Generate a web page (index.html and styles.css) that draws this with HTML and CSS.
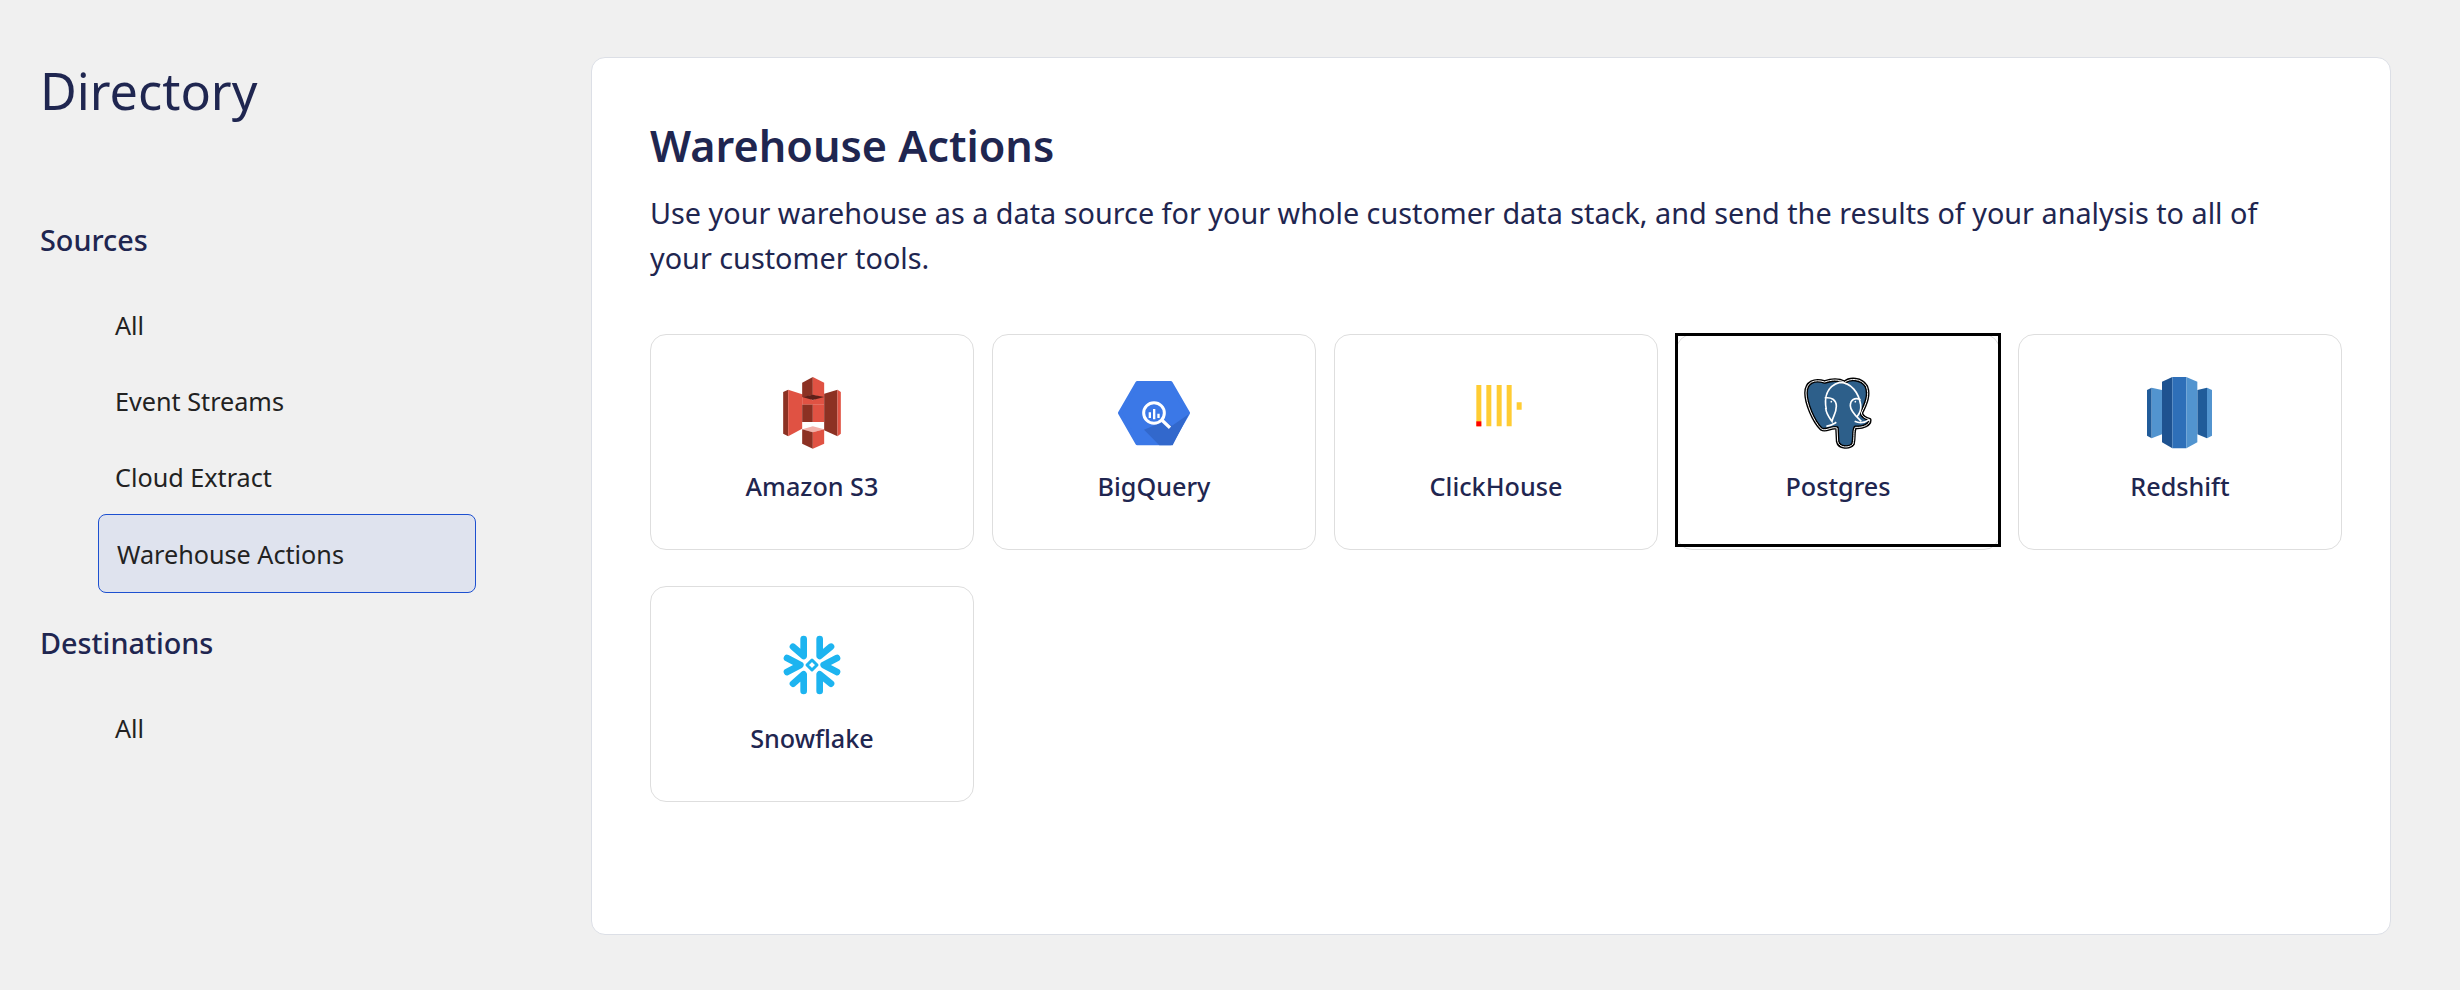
FILE: index.html
```html
<!DOCTYPE html>
<html lang="en">
<head>
  <meta charset="UTF-8" />
  <title>Directory</title>
  <link rel="stylesheet" href="styles.css">
</head>
<body>
  <div class="page">
    <aside class="sidebar">
      <h1>Directory</h1>
      <h3 class="group-title first">Sources</h3>
      <ul class="nav">
        <li>All</li>
        <li>Event Streams</li>
        <li>Cloud Extract</li>
        <li class="active">Warehouse Actions</li>
      </ul>
      <h3 class="group-title">Destinations</h3>
      <ul class="nav">
        <li>All</li>
      </ul>
    </aside>

    <main class="panel">
      <h2>Warehouse Actions</h2>
      <p class="intro">Use your warehouse as a data source for your whole customer data stack, and send the results of your analysis to all of your customer tools.</p>

      <div class="grid">
        <div class="card">
          <svg class="icon" width="58" height="72" viewBox="127 80 173 216">
            <path fill="#8c3123" d="M127 125l15-7v140l-15-8z"/>
            <path fill="#e05243" d="M142 118l42 14v103l-42 23z"/>
            <path fill="#e05243" d="M184 132l32 18 34-18v31h-66z"/>
            <path fill="#8c3123" d="M184 163h32v52h-32z"/>
            <path fill="#e05243" d="M216 163h34v52h-34z"/>
            <path fill="#8c3123" d="M184 97l32-17v55l-32 5z"/>
            <path fill="#e05243" d="M216 80l34 17v43l-34-5z"/>
            <path fill="#5e1f18" d="M184 140l32-7 34 7-34 9z"/>
            <path fill="#8c3123" d="M250 130l40-12v140l-40-18z"/>
            <path fill="#e05243" d="M290 118l10 7v125l-10 8z"/>
            <path fill="#f2b0a9" d="M184 237l32-9 34 9-34 9z"/>
            <path fill="#8c3123" d="M184 237l32 9v49l-32-15z"/>
            <path fill="#e05243" d="M216 246l34-9v43l-34 15z"/>
          </svg>
          <span class="label">Amazon S3</span>
        </div>

        <div class="card">
          <svg class="icon" width="72" height="72" viewBox="52 50 216 216">
            <path fill="#3b78e7" stroke="#3b78e7" stroke-width="12" stroke-linejoin="round" d="M58 158l52-90h100l52 90-52 91H110z"/>
            <path fill="#3268cc" d="M192 182l22 14 50-34-48 93h-40l-46-47z"/>
            <circle cx="160" cy="158" r="31" fill="none" stroke="#fff" stroke-width="9"/>
            <path stroke="#fff" stroke-width="10" d="M184 180l24 22"/>
            <path fill="#fff" d="M144 156h7v17h-7zM157 146h7v31h-7zM170 160h7v13h-7z"/>
          </svg>
          <span class="label">BigQuery</span>
        </div>

        <div class="card">
          <svg class="icon" width="57" height="72" viewBox="52 42 171 216">
            <path fill="#fc3" d="M77 66h15v124H77zM107 66h15v124h-15zM138 66h15v124h-15zM168 66h15v124h-15zM198 118h15v22h-15z"/>
            <path fill="#f00" d="M77 175h15v15H77z"/>
          </svg>
          <span class="label">ClickHouse</span>
        </div>

        <div class="card focused">
          <svg class="icon" width="72" height="72" viewBox="62 32 216 216">
            <path fill="#2d5f8a" stroke="#000" stroke-width="11" stroke-linejoin="round" d="M130 47C100 37 74 47 74 80c0 30 22 85 46 108 15 8 30-8 47-3l2 40c4 21 36 21 46 8 5-20 0-40 7-50 23 2 45-8 43-23-15-5-23-10-25-20 15-30 25-55 15-80-15-25-50-25-65-12-20-10-40-8-60-1z"/>
            <path fill="none" stroke="#fff" stroke-width="3" stroke-linejoin="round" d="M130 47C100 37 74 47 74 80c0 30 22 85 46 108 15 8 30-8 47-3l2 40c4 21 36 21 46 8 5-20 0-40 7-50 23 2 45-8 43-23-15-5-23-10-25-20 15-30 25-55 15-80-15-25-50-25-65-12-20-10-40-8-60-1z"/>
            <path fill="none" stroke="#fff" stroke-width="5" d="M135 130c-7-35 0-70 40-82 35 0 57 32 63 67 2 15-6 30-10 35M130 95c20-3 35 5 35 25 0 20-10 30-13 45-7-10-17-20-19-40M238 100c-18-8-31 0-31 18 0 17 18 32 33 47M135 180c15-2 23-8 30-12M220 165c15 7 30 5 44-5"/>
            <circle cx="150" cy="106" r="2.5" fill="#fff"/>
            <circle cx="222" cy="106" r="2.5" fill="#fff"/>
          </svg>
          <span class="label">Postgres</span>
        </div>

        <div class="card">
          <svg class="icon" width="66" height="72" viewBox="52 36 198 216">
            <path fill="#205b99" d="M52 75l14-7v152l-14-8z"/>
            <path fill="#5294cf" d="M66 68l31 7v133l-31 12z"/>
            <path fill="#205b99" d="M203 75l29-7v152l-29-12z"/>
            <path fill="#5294cf" d="M232 68l15 7v137l-15 8z"/>
            <path fill="#1e5290" d="M97 50l31-14v214l-31-18z"/>
            <path fill="#2e6fb8" d="M128 36h42v214h-42z"/>
            <path fill="#5294cf" d="M170 36l33 14v182l-33 18z"/>
          </svg>
          <span class="label">Redshift</span>
        </div>

        <div class="card">
          <svg class="icon" width="72" height="72" viewBox="17 24 216 216">
            <g fill="none" stroke="#1db4f0" stroke-width="20" stroke-linecap="round" stroke-linejoin="round">
              <path d="M68 77l32 28V54M182 77l-34 28V54M50 111l40 21-40 21M200 111l-40 21 40 21M68 188l32-28v50M182 188l-34-28v50"/>
            </g>
            <path fill="none" stroke="#1db4f0" stroke-width="9" stroke-linejoin="round" d="M125 117l15 15-15 15-15-15z"/>
          </svg>
          <span class="label">Snowflake</span>
        </div>
      </div>
    </main>
  </div>
</body>
</html>
```

FILE: styles.css
```css
* {
  box-sizing: border-box;
}
html, body {
  margin: 0;
  height: 100%;
}
body {
  font-family: "Noto Sans", sans-serif;
  background: #f0f0f0;
  color: #1f2650;
  overflow: hidden;
}
.page {
  display: flex;
  padding-top: 57px;
  height: 100%;
}
.sidebar {
  width: 591px;
  flex-shrink: 0;
  padding-left: 40px;
}
h1 {
  margin: -2px 0 0;
  font-size: 50.4px;
  font-weight: 400;
  line-height: 72px;
}
.group-title {
  margin: 0;
  font-size: 28.8px;
  font-weight: 500;
  line-height: 40px;
}
.group-title.first {
  margin-top: 93px;
}
.nav {
  list-style: none;
  margin: 27px 0 0;
  padding: 0;
}
.nav li {
  width: 378px;
  height: 76px;
  margin-left: 58px;
  padding-left: 17px;
  display: flex;
  align-items: center;
  font-size: 25.2px;
  color: #222;
}
.nav li.active {
  height: 79px;
  margin-top: -1px;
  padding-left: 18px;
  background: #dfe3ee;
  border: 1px solid #1d50d0;
  border-radius: 8px;
}
.nav + .group-title {
  margin-top: 30px;
}
.panel {
  width: 1800px;
  height: 878px;
  padding: 60px 48px 0 58px;
  background: #fff;
  border: 1px solid #dcdfe6;
  border-radius: 14px;
}
h2 {
  margin: 0;
  font-size: 43.2px;
  font-weight: 600;
  line-height: 56px;
}
.intro {
  max-width: 1650px;
  margin: 16px 0 0;
  font-size: 28.8px;
  line-height: 45px;
}
.grid {
  display: grid;
  grid-template-columns: repeat(5, 324px);
  column-gap: 18px;
  row-gap: 36px;
  margin-top: 54px;
}
.card {
  position: relative;
  height: 216px;
  display: flex;
  flex-direction: column;
  align-items: center;
  padding-top: 42px;
  background: #fff;
  border: 1px solid #dedede;
  border-radius: 16px;
}
.icon {
  display: block;
  height: 72px;
}
.label {
  margin-top: 20px;
  font-size: 25.2px;
  font-weight: 500;
  line-height: 34px;
}
.card.focused::after {
  content: "";
  position: absolute;
  top: -2px;
  left: -2px;
  right: -2px;
  bottom: 2px;
  border: 3px solid #000;
}
```
